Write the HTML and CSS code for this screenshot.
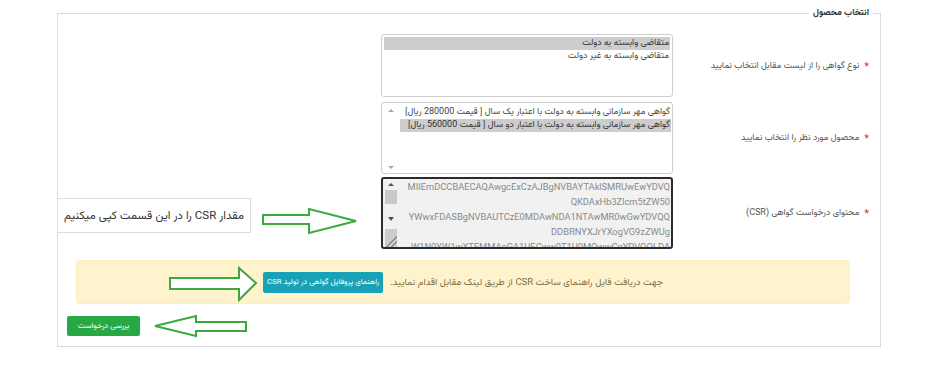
FILE: index.html
```html
<!DOCTYPE html>
<html lang="fa">
<head>
<meta charset="utf-8">
<title>انتخاب محصول</title>
<link rel="stylesheet" href="styles.css">
</head>
<body>
<div class="page">
  <fieldset class="product" dir="rtl">
    <legend class="product-legend">انتخاب محصول</legend>

    <div class="form-row">
      <div class="field-label"><span class="req">*</span><span>نوع گواهی را از لیست مقابل انتخاب نمایید</span></div>
      <div class="listbox listbox-type">
        <div class="opt selected">متقاضی وابسته به دولت</div>
        <div class="opt">متقاضی وابسته به غیر دولت</div>
      </div>
    </div>

    <div class="form-row row-product">
      <div class="field-label"><span class="req">*</span><span>محصول مورد نظر را انتخاب نمایید</span></div>
      <div class="listbox listbox-product">
        <div class="options">
          <div class="opt">گواهی مهر سازمانی وابسته به دولت با اعتبار یک سال [ قیمت 280000 ریال]</div>
          <div class="opt selected">گواهی مهر سازمانی وابسته به دولت با اعتبار دو سال [ قیمت 560000 ریال]</div>
        </div>
        <div class="vscroll">
          <span class="arrow-up light"></span>
          <span class="arrow-down light"></span>
        </div>
      </div>
    </div>

    <div class="form-row row-csr">
      <div class="field-label"><span class="req">*</span><span>محتوای درخواست گواهی (CSR)</span></div>
      <div class="csr-box">
        <div class="csr-text">
          <div class="csr-line">MIIEmDCCBAECAQAwgcExCzAJBgNVBAYTAklSMRUwEwYDVQ</div>
          <div class="csr-line">QKDAxHb3Zlcm5tZW50</div>
          <div class="csr-line">YWwxFDASBgNVBAUTCzE0MDAwNDA1NTAwMR0wGwYDVQQ</div>
          <div class="csr-line">DDBRNYXJrYXogVG9zZWUg</div>
          <div class="csr-line">W1N0YW1wXTEMMAoGA1UECww0T1U0MQwwCgYDVQQLDA</div>
        </div>
        <div class="vscroll dark">
          <span class="arrow-up"></span>
          <span class="thumb"></span>
          <span class="arrow-down"></span>
          <span class="thumb thumb-low"></span>
        </div>
      </div>
    </div>

    <div class="alert">
      <span class="alert-text">جهت دریافت فایل راهنمای ساخت CSR از طریق لینک مقابل اقدام نمایید.</span>
      <span class="btn btn-info">راهنمای پروفایل گواهی در تولید CSR</span>
    </div>

    <div class="actions">
      <span class="btn btn-success">بررسی درخواست</span>
    </div>
  </fieldset>

  <div class="callout" dir="rtl">مقدار CSR را در این قسمت کپی میکنیم</div>

  <svg class="arrow arrow-csr" width="100" height="30" viewBox="0 0 100 30">
    <polygon points="1,7 47,7 47,1 94,13 47,25 47,16 1,16" fill="#fff" stroke="#3aaa3e" stroke-width="2" stroke-linejoin="miter"/>
  </svg>
  <svg class="arrow arrow-guide" width="92" height="36" viewBox="0 0 92 36">
    <polygon points="1,11 70,11 70,1 87,16 70,33 70,22 1,22" fill="#fff" stroke="#3aaa3e" stroke-width="2"/>
  </svg>
  <svg class="arrow arrow-submit" width="96" height="24" viewBox="0 0 96 24">
    <polygon points="2,11 43,1 43,7 93,7 93,16 43,16 43,21" fill="#fff" stroke="#3aaa3e" stroke-width="2"/>
  </svg>
</div>
</body>
</html>
```

FILE: styles.css
```css
html, body {
  margin: 0;
  padding: 0;
  background: #fff;
}

body {
  font-family: "Vazirmatn", "Noto Sans Arabic", "DejaVu Sans", sans-serif;
  color: #444;
}

.page {
  position: relative;
  width: 940px;
  height: 376px;
  padding-top: 6px;
  box-sizing: border-box;
}

.product {
  box-sizing: border-box;
  width: 824px;
  margin: 0 0 0 57px;
  padding: 14px 0 10px 0;
  border: 1px solid #dcdcdc;
  min-inline-size: 0;
}

.product-legend {
  font-size: 9px;
  line-height: 14px;
  font-weight: bold;
  color: #333;
  padding: 0 4px;
  margin-right: 7px;
}

.form-row {
  display: flex;
  align-items: center;
}

.row-product { margin-top: 5px; }
.row-csr { margin-top: 3px; }

.field-label {
  box-sizing: border-box;
  width: 207px;
  padding-right: 11px;
  font-size: 9px;
  color: #555;
  display: flex;
  align-items: center;
  gap: 5px;
}

.req {
  color: #e0322e;
  font-size: 11px;
  line-height: 9px;
  padding-top: 3px;
}

.listbox {
  box-sizing: border-box;
  width: 292px;
  border: 1px solid #cfcfcf;
  border-radius: 3px;
  background: #fff;
  font-size: 9px;
  color: #444;
}

.listbox-type {
  height: 63px;
  padding: 2px 2px 0 2px;
}

.opt {
  line-height: 13px;
  padding-right: 1px;
  white-space: nowrap;
}

.opt.selected {
  background: #cdcdcd;
  color: #333;
}

.listbox-product {
  height: 72px;
  display: flex;
  padding: 3px 1px 1px 1px;
}

.listbox-product .options {
  flex: 1;
  padding-left: 2px;
}

.vscroll {
  width: 15px;
  display: flex;
  flex-direction: column;
  align-items: center;
  justify-content: space-between;
  padding: 3px 0;
  box-sizing: border-box;
}

.arrow-up, .arrow-down {
  width: 0;
  height: 0;
  border-left: 3px solid transparent;
  border-right: 3px solid transparent;
}

.arrow-up { border-bottom: 3px solid #505050; }
.arrow-down { border-top: 3px solid #505050; }
.arrow-up.light { border-bottom-color: #a8a8a8; }
.arrow-down.light { border-top-color: #a8a8a8; }

.csr-box {
  box-sizing: border-box;
  width: 292px;
  height: 72px;
  border: 2px solid #2b2b2b;
  border-radius: 3px;
  background: #f1f1f1;
  display: flex;
  overflow: hidden;
}

.csr-text {
  flex: 1;
  min-width: 0;
  padding: 0 1px 0 3px;
  font-family: Roboto, "Liberation Sans", sans-serif;
  font-size: 9.3px;
  line-height: 15px;
  color: #8a8a8a;
}

.csr-line {
  text-align: right;
  white-space: nowrap;
}

.vscroll.dark {
  justify-content: flex-start;
  padding: 4px 0 0 0;
  position: relative;
}

.vscroll.dark .arrow-up { margin-bottom: 4px; }

.thumb {
  width: 12px;
  height: 15px;
  background: #c9c9c9;
}

.vscroll.dark .arrow-down { margin-top: 13px; border-top-width: 4px; }

.thumb-low {
  margin-top: 8px;
  height: 20px;
  background: #cdcdcd;
  background-image: linear-gradient(135deg, transparent 62%, #8a8a8a 62%, #8a8a8a 68%, transparent 68%, transparent 78%, #8a8a8a 78%, #8a8a8a 84%, transparent 84%);
}

.alert {
  box-sizing: border-box;
  height: 44px;
  margin: 11px 30px 0 18px;
  background: #fff3cd;
  border: 1px solid #fdeebf;
  border-radius: 4px;
  display: flex;
  align-items: center;
  justify-content: center;
  gap: 7px;
}

.alert-text {
  font-size: 9.5px;
  color: #7d6d48;
}

.btn {
  display: inline-flex;
  align-items: center;
  justify-content: center;
  box-sizing: border-box;
  color: #fff;
  border-radius: 2px;
  white-space: nowrap;
}

.btn-info {
  height: 21px;
  padding: 0 4px;
  background: #17a2b8;
  font-size: 7.8px;
}

.actions {
  display: flex;
  justify-content: flex-end;
  margin-top: 12px;
  padding-left: 9px;
}

.btn-success {
  width: 73px;
  height: 20px;
  background: #28a745;
  font-size: 8px;
}

.callout {
  position: absolute;
  left: 57px;
  top: 198px;
  width: 194px;
  height: 35px;
  box-sizing: border-box;
  background: #fff;
  border: 1px solid #dcdcdc;
  font-size: 11.5px;
  color: #333;
  display: flex;
  align-items: center;
  justify-content: center;
}

.arrow {
  position: absolute;
  overflow: visible;
}

.arrow-csr { left: 262px; top: 208px; }
.arrow-guide { left: 169px; top: 267px; }
.arrow-submit { left: 153px; top: 315px; }
```
